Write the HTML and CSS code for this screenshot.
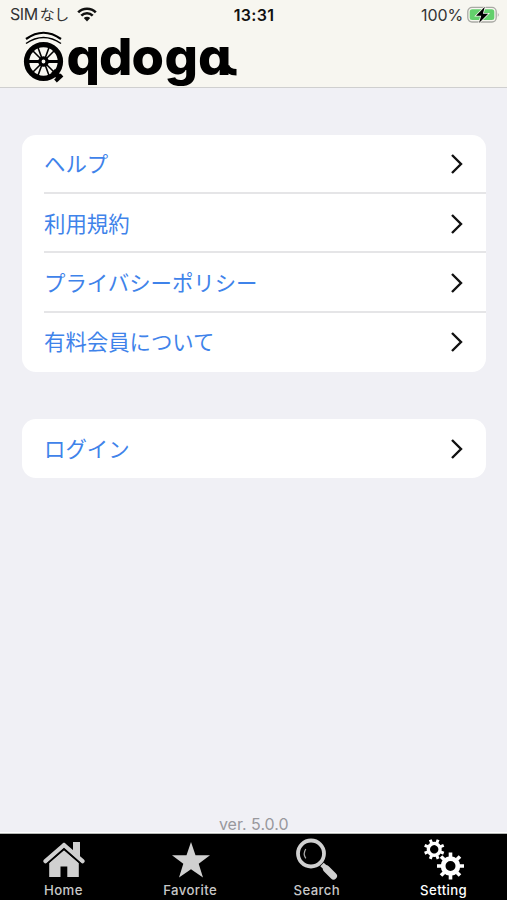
FILE: index.html
```html
<!DOCTYPE html>
<html lang="ja">
<head>
<meta charset="utf-8">
<title>Setting</title>
<link rel="stylesheet" href="styles.css">
</head>
<body>
<svg class="defs" aria-hidden="true">
  <symbol id="chevron" viewBox="0 0 14 22"><path d="M2 2 11 11 2 20" fill="none" stroke="#111" stroke-width="2.4"/></symbol>
</svg>
<header class="header">
  <div class="status">
    <div class="carrier"><span>SIM<span class="kana">なし</span></span>
      <svg class="wifi" viewBox="0 0 20 15"><path d="M1.2 5.3a12.5 12.5 0 0 1 17.6 0M4.3 8.6a8.1 8.1 0 0 1 11.4 0" fill="none" stroke="#111" stroke-width="2.6"/><path d="M6.8 11.1a4.6 4.6 0 0 1 6.4 0L10 14.4Z" fill="#111"/></svg>
    </div>
    <div class="clock">13:31</div>
    <div class="power"><span>100%</span>
      <svg class="battery" viewBox="0 0 33 18"><rect x=".8" y="1.4" width="28.4" height="14.6" rx="4.2" fill="none" stroke="#aaaaa5" stroke-width="1.3"/><rect x="2.7" y="3.3" width="24.6" height="10.8" rx="2.5" fill="#63d06c"/><path d="M30.8 6.5q1.8 2.2 0 4.4Z" fill="#aaaaa5"/><path d="M17.8.8 9 9.7h5.2L12 17l9.2-9.2h-5.3Z" fill="#000" stroke="#f7f6f0" stroke-width="1.5" paint-order="stroke"/></svg>
    </div>
  </div>
  <div class="brand">
    <svg class="wheel" viewBox="0 0 42 54">
      <g fill="none" stroke="#000">
        <path d="M3 9Q20.5-3.500 38 9" stroke-width="2.200"/>
        <path d="M3 13.500Q20.5 1.5 38 13.500" stroke-width="1.500"/>
        <circle cx="20.5" cy="31.5" r="16.9" stroke-width="5.4"/>
        <path d="M30 41 37 48" stroke-width="5.500"/>
        <path d="M32.500 51 39 45" stroke-width="4"/>
        <circle cx="20.5" cy="31.5" r="3.6" stroke-width="3.4"/>
        <path d="M16.500 31.500H5M24.500 31.500H36" stroke-width="3"/>
        <path d="m17.500 28.500-8-8M18.800 28l-4-11M23.500 28.500l8-8M22.200 28l4-11M17.500 34.500l-8 8M18.800 35l-4 11M23.500 34.500l8 8M22.200 35l4 11" stroke-width="1.600"/>
      </g>
    </svg>
    <svg class="wordmark" viewBox="0 0 172 54"><g transform="translate(0 45) scale(1 .97)"><text x="0.500 33 65.500 98.500 132">qdoga</text></g><path d="M160 36Q162 42.200 170.500 42.200" fill="none" stroke="#000" stroke-width="6.500"/></svg>
  </div>
</header>
<main class="content">
  <nav class="card">
    <a class="row"><span>ヘルプ</span><svg><use href="#chevron"/></svg></a>
    <a class="row"><span>利用規約</span><svg><use href="#chevron"/></svg></a>
    <a class="row"><span>プライバシーポリシー</span><svg><use href="#chevron"/></svg></a>
    <a class="row"><span>有料会員について</span><svg><use href="#chevron"/></svg></a>
  </nav>
  <nav class="card">
    <a class="row"><span>ログイン</span><svg><use href="#chevron"/></svg></a>
  </nav>
  <p class="version">ver. 5.0.0</p>
</main>
<footer class="tabs">
  <a class="tab"><svg viewBox="-1 0 44 44"><path d="M31 4h7v15l-7-6Z"/><path d="M22 7 3.500 23.200M22 7l18.500 16.200" fill="none" stroke="#d0d0d0" stroke-width="4.200" stroke-linecap="round"/><path d="M22 12 7.200 24.800V39h11.300V28.500h6.800V39h11.500V24.800Z"/><path d="M5 26 22 11.200 39 26" fill="none" stroke="#000" stroke-width="1.600"/></svg><span>Home</span></a>
  <a class="tab"><svg viewBox="-.5 0 44 44"><path d="m22.500 4 4.500 13.200h14.500L30.200 25.800 34.500 39.500l-12-8.300-12 8.300 4.300-13.700L3.500 17.200H18Z"/></svg><span>Favorite</span></a>
  <a class="tab"><svg viewBox="0 0 44 44"><circle cx="16" cy="15.500" r="13" fill="none" stroke="#d0d0d0" stroke-width="3.800"/><path d="M10.800 11q-3.200 4.800 0 9.300" fill="none" stroke="#aaa" stroke-width="1.300"/><path d="m27 26.500 4 3.700" stroke="#d0d0d0" stroke-width="5"/><path d="m31.500 31 7 7" stroke="#d0d0d0" stroke-width="7" stroke-linecap="round"/></svg><span>Search</span></a>
  <a class="tab active"><svg viewBox="0 0 44 44">
    <g fill="none" stroke="#fff">
      <g transform="translate(12.2 11.300) rotate(22.500)"><circle r="5.900" stroke-width="3.400"/><path d="M0-6.800V-10.300M0 6.800V10.300M-6.800 0H-10.300M6.800 0H10.300M4.800-4.800 7.300-7.300M-4.800 4.800-7.300 7.300M-4.800-4.800-7.300-7.300M4.800 4.800 7.300 7.300" stroke-width="3"/></g>
      <g transform="translate(28.500 28)"><circle r="7.400" stroke-width="4.800"/><path d="M0-9V-13.500M0 9V13.500M-9 0H-13.500M9 0H13.500M6.400-6.400 9.500-9.500M-6.400 6.400-9.500 9.500M-6.400-6.400-9.500-9.500M6.400 6.400 9.500 9.500" stroke-width="3.600"/></g>
    </g></svg><span>Setting</span></a>
</footer>
</body>
</html>
```
FILE: styles.css
```css
* { box-sizing: border-box; }
body {
  margin: 0;
  height: 900px;
  display: flex;
  flex-direction: column;
  overflow: hidden;
  background: #f0f0f5;
  font-family: Inter, "Noto Sans CJK JP", sans-serif;
}
.defs { position: absolute; width: 0; height: 0; }
.header {
  height: 88px;
  background: #f7f6f0;
  border-bottom: 1px solid #cfcfcf;
}
.status {
  height: 30px;
  padding: 0 7px 2px 10px;
  display: grid;
  grid-template-columns: 1fr auto 1fr;
  align-items: center;
  font-size: 16px;
  line-height: 28px;
  color: #333;
}
.carrier, .power { display: flex; align-items: center; }
.carrier { gap: 8px; letter-spacing: -.4px; }
.kana { font-size: 15px; letter-spacing: -.6px; margin-left: 2px; }
.wifi { width: 20px; height: 15px; }
.clock { color: #111; font-weight: 600; letter-spacing: .3px; margin-right: 2px; }
.power { justify-content: flex-end; gap: 4px; letter-spacing: -.1px; }
.battery { width: 33px; height: 18px; }
.brand { display: flex; padding-left: 23px; }
.wheel { width: 42px; height: 54px; }
.wordmark { width: 172px; height: 54px; margin-left: 1px; overflow: visible; }
.wordmark text {
  font: 800 52.5px Inter, sans-serif;
  font-feature-settings: "cv11";
}
.content {
  flex: 1;
  display: flex;
  flex-direction: column;
  padding: 46.5px 21.5px 0 22px;
  border-bottom: 1px solid #fff;
}
.card {
  margin-bottom: 47px;
  background: #fff;
  border-radius: 14px;
}
.row {
  height: 59.35px;
  margin-left: 22px;
  padding-right: 22px;
  display: flex;
  align-items: center;
  justify-content: space-between;
  color: #3f83ea;
  font: 21.4px/30px "Noto Sans CJK JP", sans-serif;
}
.row:not(:last-child) { padding-top: 2px; border-bottom: 2px solid #e5e5e7; }
.row span { padding-bottom: 2px; }
.row svg { width: 14px; height: 22px; }
.version {
  margin: auto 0 0;
  text-align: center;
  font-size: 16px;
  line-height: 15px;
  color: #98989d;
}
.tabs {
  height: 67px;
  display: flex;
  background: #000;
  border-top: 1px solid #b5b8b5;
}
.tab {
  flex: 1;
  display: flex;
  flex-direction: column;
  align-items: center;
  padding-top: 4px;
  color: #c8c8c8;
  fill: #d0d0d0;
  font-size: 13.2px;
  font-weight: 500;
  line-height: 16px;
  letter-spacing: .4px;
}
.tab svg { width: 44px; height: 44px; }
.active { color: #fff; }
```
